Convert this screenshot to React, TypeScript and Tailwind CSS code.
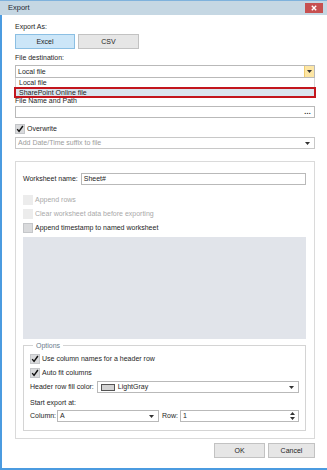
import React from "react";

const font = { fontFamily: '"Liberation Sans", Arial, sans-serif' };

function Check({ checked, disabled }: { checked?: boolean; disabled?: boolean }) {
  return (
    <div
      className={
        "w-[10px] h-[10px] flex-shrink-0 flex items-center justify-center " +
        (disabled ? "bg-[#ececec]" : "bg-[#d9dadc] border border-[#c4c6c9]")
      }
    >
      {checked && (
        <svg width="10" height="10" viewBox="0 0 10 10">
          <path d="M1.5 5.2 L3.8 8 L8.6 1.2" fill="none" stroke="#111" strokeWidth="1.8" />
        </svg>
      )}
    </div>
  );
}

function Arrow() {
  return (
    <svg width="5" height="3" viewBox="0 0 5 3" className="flex-shrink-0">
      <path d="M0 0 H5 L2.5 3 Z" fill="#333" />
    </svg>
  );
}

function CheckRow({ label, checked, disabled }: { label: string; checked?: boolean; disabled?: boolean }) {
  return (
    <div className="flex items-center gap-[2px] h-[11px]">
      <Check checked={checked} disabled={disabled} />
      <span className={disabled ? "text-[#a9a9a9]" : "text-[#1e1e1e]"}>{label}</span>
    </div>
  );
}

export default function App() {
  return (
    <div
      className="w-[327px] h-[470px] flex flex-col bg-white text-[7px] leading-[10px] text-[#1e1e1e]"
      style={font}
    >
      <div className="h-[15px] flex items-center justify-between bg-[#c5d7e3] border-t border-[#7fb2dc] pl-[8px] pr-[4px]">
        <span className="text-[#1f2a33] text-[7.5px]">Export</span>
        <div className="w-[18px] h-[10px] bg-[#c75050] flex items-center justify-center">
          <svg width="6" height="6" viewBox="0 0 6 6">
            <path d="M0.8 0.8 L5.2 5.2 M5.2 0.8 L0.8 5.2" stroke="#fff" strokeWidth="1.4" />
          </svg>
        </div>
      </div>
      <div className="flex-1 flex flex-col border-l-2 border-b-2 border-[#4b9be0] pl-[13px] pr-[12px]">
        <div className="mt-[7px] h-[10px]">Export As:</div>
        <div className="mt-[2px] flex gap-[3px]">
          <div className="w-[60px] h-[15px] flex items-center justify-center bg-[#cce6f8] border border-[#8bbfe3]">Excel</div>
          <div className="w-[61px] h-[15px] flex items-center justify-center bg-[#e6e6e6] border border-[#c2c2c2]">CSV</div>
        </div>
        <div className="mt-[4px] h-[10px]">File destination:</div>
        <div className="mt-[2px] h-[13px] flex items-stretch border border-[#b9b9b9]">
          <div className="flex-1 flex items-center pl-[2px]">Local file</div>
          <div className="w-[10px] bg-[#fde6a4] border-l border-[#efcb6e] flex items-center justify-center">
            <Arrow />
          </div>
        </div>
        <div className="h-[10px] flex items-center pl-[3px] border-x border-[#d6d6d6]">Local file</div>
        <div className="-mx-px -mt-px h-[11px] flex items-center pl-[3px] bg-[#dbe5ee] border-2 border-[#c3161d]">
          SharePoint Online file
        </div>
        <div className="-mt-[2px] h-[9px] leading-[9px]">File Name and Path</div>
        <div className="mt-[1px] h-[12px] flex items-center justify-end pr-[3px] border border-[#b9b9b9]">
          <span className="tracking-[0.3px] font-bold leading-[6px]">...</span>
        </div>
        <div className="mt-[5px]">
          <CheckRow label="Overwrite" checked />
        </div>
        <div className="mt-[3px] h-[12px] flex items-center justify-between pl-[2px] pr-[4px] border border-[#c8c8c8]">
          <span className="text-[#9c9c9c]">Add Date/Time suffix to file</span>
          <Arrow />
        </div>

        <div className="mt-[12px] h-[278px] border border-[#dadada] flex flex-col pl-[7px] pr-[8px] pt-[11px]">
          <div className="flex items-center gap-[3px]">
            <span>Worksheet name:</span>
            <div className="flex-1 h-[12px] flex items-center pl-[2px] border border-[#b9b9b9]">Sheet#</div>
          </div>
          <div className="mt-[9px]">
            <CheckRow label="Append rows" disabled />
          </div>
          <div className="mt-[3px]">
            <CheckRow label="Clear worksheet data before exporting" disabled />
          </div>
          <div className="mt-[3px]">
            <CheckRow label="Append timestamp to named worksheet" />
          </div>
          <div className="mt-[4px] h-[102px] bg-[#e1e4ea]" />
          <fieldset className="mt-[2px] h-[90px] border border-[#d4d4d4] pl-[6px] pr-[6px] min-w-0">
            <legend className="ml-[3px] px-[3px] text-[#6b7b8d] leading-[9px]">Options</legend>
            <div className="mt-[3px]">
              <CheckRow label="Use column names for a header row" checked />
            </div>
            <div className="mt-[3px]">
              <CheckRow label="Auto fit columns" checked />
            </div>
            <div className="mt-[3px] flex items-center gap-[3px]">
              <span>Header row fill color:</span>
              <div className="flex-1 h-[12px] flex items-center pl-[3px] pr-[4px] border border-[#b9b9b9]">
                <div className="w-[14px] h-[7px] bg-[#d3d3d3] border border-[#555]" />
                <span className="ml-[3px] flex-1">LightGray</span>
                <Arrow />
              </div>
            </div>
            <div className="mt-[5px] h-[10px]">Start export at:</div>
            <div className="mt-[2px] flex items-center">
              <span className="w-[27px]">Column:</span>
              <div className="w-[102px] h-[12px] flex items-center pl-[2px] pr-[4px] border border-[#b9b9b9]">
                <span className="flex-1">A</span>
                <Arrow />
              </div>
              <span className="ml-[3px] w-[18px]">Row:</span>
              <div className="flex-1 h-[12px] flex items-center pl-[2px] pr-[3px] border border-[#b9b9b9]">
                <span className="flex-1">1</span>
                <svg width="5" height="8" viewBox="0 0 5 8">
                  <path d="M0 3 H5 L2.5 0 Z M0 5 H5 L2.5 8 Z" fill="#333" />
                </svg>
              </div>
            </div>
          </fieldset>
        </div>

        <div className="mt-[4px] flex justify-end gap-[3px]">
          <div className="w-[51px] h-[15px] flex items-center justify-center bg-[#e6e6e6] border border-[#c2c2c2]">OK</div>
          <div className="w-[47px] h-[15px] flex items-center justify-center bg-[#e6e6e6] border border-[#c2c2c2]">Cancel</div>
        </div>
      </div>
    </div>
  );
}
